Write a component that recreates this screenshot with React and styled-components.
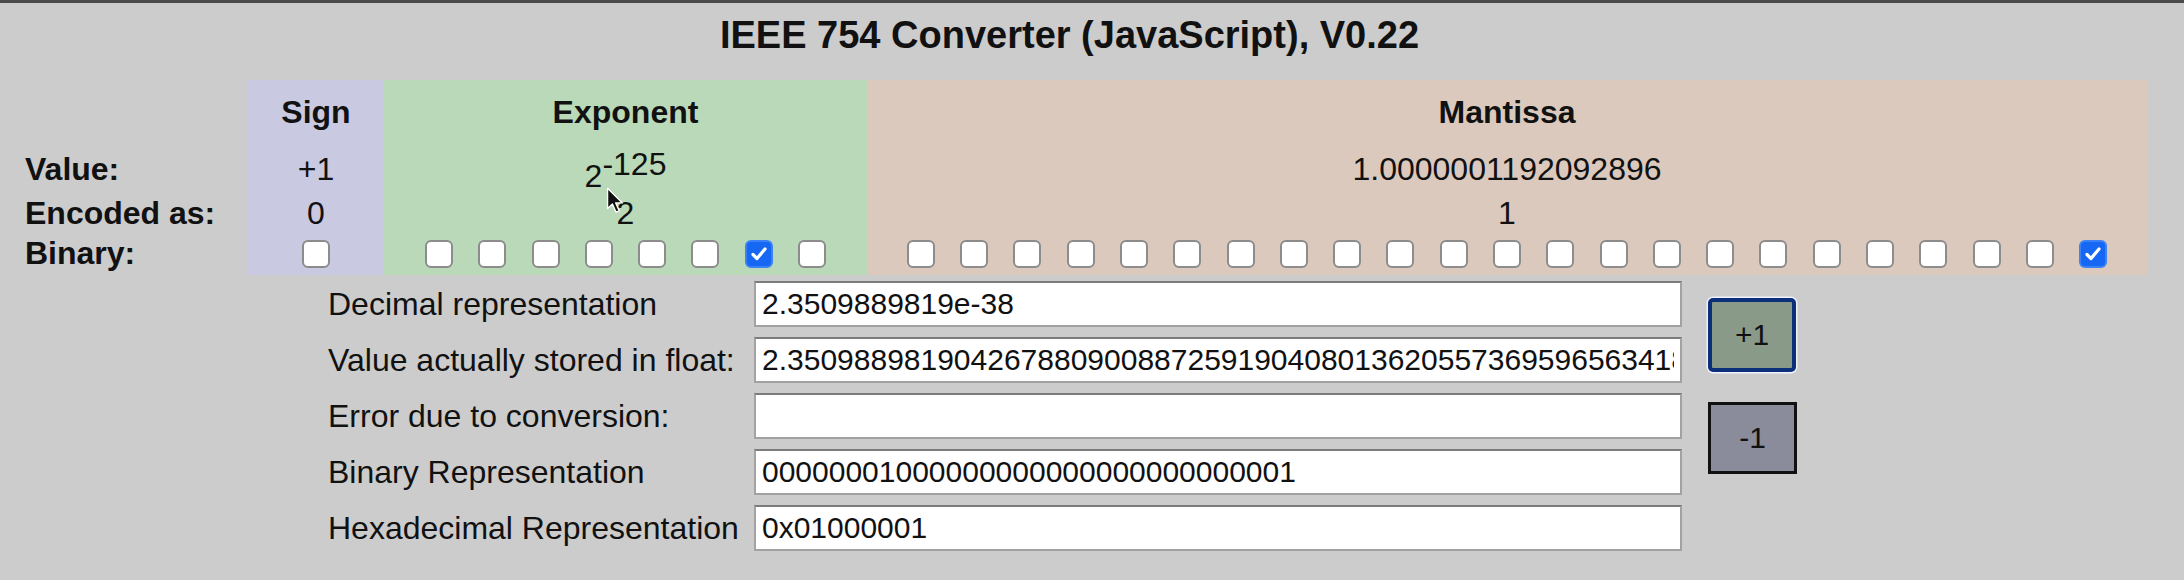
import { Fragment } from 'react'
import styled, { createGlobalStyle } from 'styled-components'

const GlobalStyle = createGlobalStyle`
  html, body {
    margin: 0;
    padding: 0;
    background: #cccccc;
  }
  body {
    font-family: "Liberation Sans", Arial, sans-serif;
    color: #111;
  }
`

const Page = styled.div`
  position: relative;
  width: 2184px;
  height: 580px;
  box-sizing: border-box;
  border-top: 3px solid #4a4a4a;
  background: #cccccc;
  overflow: hidden;
`

const Title = styled.h1`
  width: 2139px;
  height: 77px;
  margin: 0;
  padding-top: 10px;
  box-sizing: border-box;
  text-align: center;
  font-size: 38px;
  font-weight: bold;
  line-height: 44px;
`

const BitTable = styled.div`
  display: flex;
  margin-left: 25px;
`

const Column = styled.div`
  display: grid;
  grid-template-rows: 64px 50px 38px 43px;
  width: ${p => p.$width}px;
  background: ${p => p.$bg || 'transparent'};
`

const Cell = styled.div`
  display: flex;
  align-items: center;
  justify-content: ${p => (p.$left ? 'flex-start' : 'center')};
  font-size: 32px;
  font-weight: ${p => (p.$bold ? 'bold' : 'normal')};
  white-space: nowrap;
`

const Power = styled.span`
  display: inline-block;
  padding-top: 4px;
  sup {
    font-size: 1em;
    vertical-align: 12px;
    line-height: 1;
  }
`

const Bits = styled.div`
  display: flex;
  align-items: center;
  justify-content: center;
  gap: 25.3px;
`

const Box = styled.span`
  display: inline-flex;
  align-items: center;
  justify-content: center;
  width: 28px;
  height: 28px;
  box-sizing: border-box;
  border-radius: 6px;
  border: 2px solid ${p => (p.$on ? '#3b82f7' : '#8c8c8c')};
  background: ${p => (p.$on ? '#1668f4' : '#ffffff')};
`

const Form = styled.div`
  display: grid;
  grid-template-columns: 426px 928px 114px;
  grid-auto-rows: 46px;
  row-gap: 10px;
  margin-left: 328px;
  margin-top: 6px;
`

const Label = styled.div`
  display: flex;
  align-items: center;
  font-size: 32px;
  white-space: nowrap;
`

const Field = styled.input`
  width: 928px;
  height: 46px;
  box-sizing: border-box;
  margin: 0;
  padding: 0 6px;
  border: 2px solid #a2a2a2;
  border-top-color: #7c7c7c;
  background: #fff;
  font-family: "Liberation Sans", Arial, sans-serif;
  font-size: 30px;
  color: #111;
  outline: none;
`

const ButtonStack = styled.div`
  grid-column: 3;
  grid-row: 1 / span 5;
  display: flex;
  flex-direction: column;
  align-items: flex-start;
  padding: 17px 0 0 26px;
  gap: 30px;
`

const StepButton = styled.button`
  width: ${p => (p.$focus ? 88 : 89)}px;
  height: ${p => (p.$focus ? 74 : 72)}px;
  box-sizing: border-box;
  margin: 0;
  padding: 0;
  font-family: "Liberation Sans", Arial, sans-serif;
  font-size: 30px;
  color: #111;
  background: ${p => (p.$focus ? '#8a9a88' : '#8a8b9b')};
  border: ${p => (p.$focus ? '4px solid #0b2f78' : '3px solid #111')};
  border-radius: ${p => (p.$focus ? '5px' : '0')};
  box-shadow: ${p => (p.$focus ? '0 0 0 1.5px #eef2fb' : 'none')};
`

const Cursor = styled.svg`
  position: absolute;
  left: 606px;
  top: 184px;
`

const Bit = ({ on }) => (
  <Box $on={on}>
    {on && (
      <svg width="20" height="20" viewBox="0 0 20 20">
        <path d="M4 10.5 L8 14.5 L16 5" fill="none" stroke="#fff" strokeWidth="3.2" strokeLinecap="round" strokeLinejoin="round" />
      </svg>
    )}
  </Box>
)

const BitRow = ({ count, set = [] }) => (
  <Bits>
    {Array.from({ length: count }, (_, i) => (
      <Bit key={i} on={set.includes(i)} />
    ))}
  </Bits>
)

const rows = [
  ['Decimal representation', '2.3509889819e-38'],
  ['Value actually stored in float:', '2.350988981904267880900887259190408013620557369596563418320657763970491296867670882875245297e-38'],
  ['Error due to conversion:', ''],
  ['Binary Representation', '00000001000000000000000000000001'],
  ['Hexadecimal Representation', '0x01000001'],
]

export default function App() {
  return (
    <Page>
      <GlobalStyle />
      <Title>IEEE 754 Converter (JavaScript), V0.22</Title>

      <BitTable>
        <Column $width={223}>
          <Cell />
          <Cell $left $bold>Value:</Cell>
          <Cell $left $bold>Encoded as:</Cell>
          <Cell $left $bold>Binary:</Cell>
        </Column>
        <Column $width={136} $bg="#c9c9e1">
          <Cell $bold>Sign</Cell>
          <Cell>+1</Cell>
          <Cell>0</Cell>
          <Cell><BitRow count={1} /></Cell>
        </Column>
        <Column $width={483} $bg="#bad9b9">
          <Cell $bold>Exponent</Cell>
          <Cell><Power>2<sup>-125</sup></Power></Cell>
          <Cell>2</Cell>
          <Cell><BitRow count={8} set={[6]} /></Cell>
        </Column>
        <Column $width={1280} $bg="#dbc9bd">
          <Cell $bold>Mantissa</Cell>
          <Cell>1.0000001192092896</Cell>
          <Cell>1</Cell>
          <Cell><BitRow count={23} set={[22]} /></Cell>
        </Column>
      </BitTable>

      <Form>
        {rows.map(([label, value], i) => (
          <Fragment key={i}>
            <Label style={{ gridRow: i + 1 }}>{label}</Label>
            <Field style={{ gridRow: i + 1 }} readOnly value={value} />
          </Fragment>
        ))}
        <ButtonStack>
          <StepButton $focus>+1</StepButton>
          <StepButton>-1</StepButton>
        </ButtonStack>
      </Form>

      <Cursor width="18" height="27" viewBox="0 0 13 20">
        <path d="M1 1 L1 16 L4.6 12.6 L7.2 18.6 L9.6 17.6 L7 11.8 L12 11.8 Z" fill="#111" stroke="#fff" strokeWidth="1" strokeLinejoin="round" />
      </Cursor>
    </Page>
  )
}
